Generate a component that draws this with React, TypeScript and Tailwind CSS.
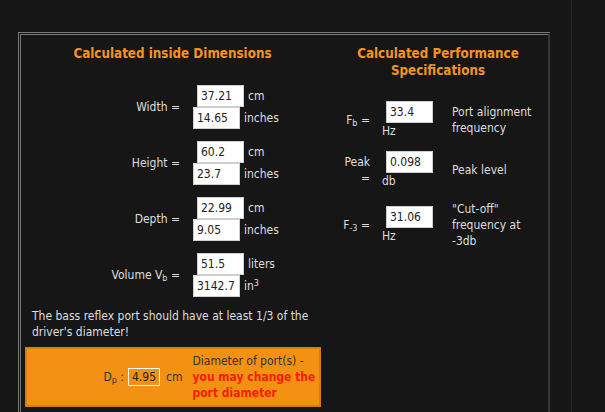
import React from "react";

const font = "font-['DejaVu_Sans_Condensed','DejaVu_Sans',sans-serif]";

const dims = [
  { label: "Width =", cm: "37.21", inches: "14.65", u1: "cm", u2: "inches" },
  { label: "Height =", cm: "60.2", inches: "23.7", u1: "cm", u2: "inches" },
  { label: "Depth =", cm: "22.99", inches: "9.05", u1: "cm", u2: "inches" },
];

const Box = ({ value, className = "" }: { value: string; className?: string }) => (
  <input
    readOnly
    value={value}
    className={`w-[47px] h-[22px] bg-white border border-[#cfcfcf] pl-[3px] pr-[4px] text-[12px] text-[#222] outline-none ${font} ${className}`}
  />
);

const App = () => {
  return (
    <div className={`w-[605px] h-[412px] bg-[#161616] overflow-hidden flex text-[12px] leading-[16px] text-[#dedede] ${font}`}>
      <div className="w-[572px] h-full border-r border-r-[#242424] pl-[18px] pt-[32px] shrink-0">
        <div className="w-[532px] h-[400px] flex border-t-[3px] border-l-[3px] border-double border-t-[#7a7a7a] border-l-[#7a7a7a] border-r-2 [border-right-style:solid] border-r-[#353535]">
          {/* left column */}
          <div className="w-[303px] pt-[10px] flex flex-col">
            <h2 className="text-center text-[13.3px] leading-[17px] font-bold text-[#f7931e]">
              Calculated inside Dimensions
            </h2>

            <div className="mt-[23px] flex flex-col gap-[12px]">
              {dims.map((d) => (
                <div key={d.label} className="flex items-center">
                  <div className="w-[159px] text-right">{d.label}</div>
                  <div className="ml-[13px] flex flex-col">
                    <div className="flex items-center">
                      <Box value={d.cm} className="ml-[4px]" />
                      <span className="ml-[4px]">{d.u1}</span>
                    </div>
                    <div className="flex items-center">
                      <Box value={d.inches} />
                      <span className="ml-[4px]">{d.u2}</span>
                    </div>
                  </div>
                </div>
              ))}
              <div className="flex items-center">
                <div className="w-[159px] text-right">
                  Volume V<sub>b</sub> =
                </div>
                <div className="ml-[13px] flex flex-col">
                  <div className="flex items-center">
                    <Box value="51.5" className="ml-[4px]" />
                    <span className="ml-[4px]">liters</span>
                  </div>
                  <div className="flex items-center">
                    <Box value="3142.72" />
                    <span className="ml-[4px]">
                      in<sup>3</sup>
                    </span>
                  </div>
                </div>
              </div>
            </div>

            <p className="mt-[11px] pl-[11px] pr-[8px]">
              The bass reflex port should have at least 1/3 of the driver's diameter!
            </p>

            <div className="mt-[7px] ml-[4px] w-[296px] h-[60px] bg-[#f29112] border-2 border-[#d47f0e] flex items-center text-[#333]">
              <div className="w-[156px] flex items-center justify-end">
                <span>
                  D<sub>p</sub> :
                </span>
                <input
                  readOnly
                  value="4.95"
                  className={`ml-[4px] w-[32px] h-[18px] bg-transparent border border-white pl-[3px] text-[12px] text-[#222] outline-none ${font}`}
                />
                <span className="ml-[6px]">cm</span>
              </div>
              <div className="ml-[10px] w-[127px]">
                Diameter of port(s) -{" "}
                <span className="font-bold text-[#ff1a00]">you may change the port diameter</span>
              </div>
            </div>
          </div>

          {/* right column */}
          <div className="flex-1 pt-[10px] flex flex-col">
            <h2 className="text-center text-[13.3px] leading-[17px] font-bold text-[#f7931e] pl-[4px]">
              Calculated Performance
              <br />
              Specifications
            </h2>

            <div className="mt-[22px] flex flex-col gap-[12px]">
              <div className="flex items-center">
                <div className="ml-[16px] w-[30px] text-right">
                  F<sub>b</sub> =
                </div>
                <div className="ml-[12px] w-[51px] flex flex-col">
                  <Box value="33.4" className="ml-[4px]" />
                  <span>Hz</span>
                </div>
                <div className="ml-[19px] w-[92px]">Port alignment frequency</div>
              </div>

              <div className="flex items-center">
                <div className="ml-[16px] w-[30px] text-right">Peak =</div>
                <div className="ml-[12px] w-[51px] flex flex-col">
                  <Box value="0.098" className="ml-[4px]" />
                  <span>db</span>
                </div>
                <div className="ml-[19px] w-[92px]">Peak level</div>
              </div>

              <div className="flex items-center">
                <div className="ml-[16px] w-[30px] text-right">
                  F<sub>-3</sub> =
                </div>
                <div className="ml-[12px] w-[51px] flex flex-col">
                  <Box value="31.06" className="ml-[4px]" />
                  <span>Hz</span>
                </div>
                <div className="ml-[19px] w-[92px]">"Cut-off" frequency at -3db</div>
              </div>
            </div>
          </div>
        </div>
      </div>
    </div>
  );
};

export default App;
